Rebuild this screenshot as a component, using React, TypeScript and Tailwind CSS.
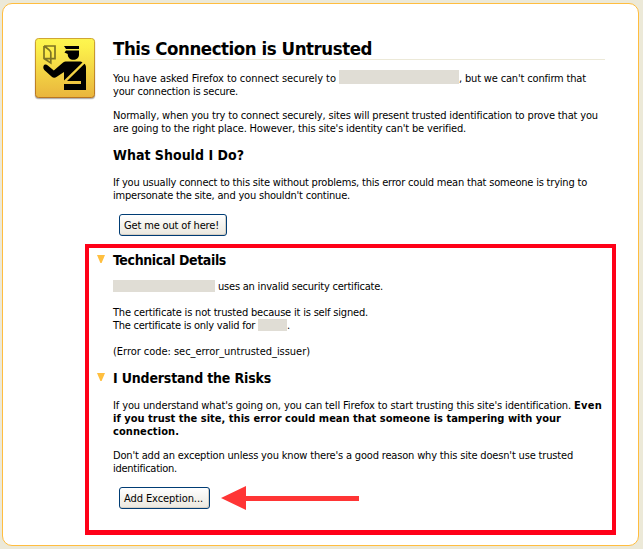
import { useLayoutEffect, useRef, type ReactNode } from "react";

/** A single run of text whose tracking is computed so that it fills `width` pixels. */
function Run({ width, children, className = "" }: { width: number; children: string; className?: string }) {
  const ref = useRef<HTMLSpanElement>(null);
  useLayoutEffect(() => {
    const el = ref.current;
    if (!el) return;
    el.style.letterSpacing = "0px";
    const natural = el.getBoundingClientRect().width;
    el.style.letterSpacing = `${(width - natural) / children.length}px`;
  }, [width, children]);
  return (
    <span ref={ref} className={`inline-block shrink-0 whitespace-pre ${className}`}>
      {children}
    </span>
  );
}

function Line({ children }: { children: ReactNode }) {
  return <div className="flex h-[13px] items-center leading-[13px]">{children}</div>;
}

function Heading({ width, children }: { width: number; children: string }) {
  return (
    <h2 className="flex h-5 items-center text-[14px] leading-5 font-bold">
      <Run width={width}>{children}</Run>
    </h2>
  );
}

function Marker() {
  return (
    <svg className="mt-[5px] mr-[8px] h-2 w-2 shrink-0" viewBox="0 0 8 8">
      <path d="M0 0H8L4.6 8H3.4Z" fill="#ffbf3f" />
    </svg>
  );
}

function Button({ children, size, width }: { children: string; size: string; width: number }) {
  return (
    <button
      className={`flex h-[22px] items-center rounded-[3px] border border-[#003c74] bg-linear-to-b from-white via-[#f4f3ee] to-[#ebe8df] pl-[4px] leading-[13px] shadow-[inset_-1px_-1px_0_#d6d0c5] ${size}`}
    >
      <Run width={width}>{children}</Run>
    </button>
  );
}

function OfficerIcon() {
  return (
    <svg className="h-[64px] w-[64px] shrink-0" viewBox="0 0 64 64">
      <defs>
        <linearGradient id="plate" x1="0" y1="0" x2="0" y2="1">
          <stop offset="0" stopColor="#fdf650" />
          <stop offset="0.15" stopColor="#fcf04b" />
          <stop offset="1" stopColor="#e9b53d" />
        </linearGradient>
        <linearGradient id="edge" x1="0" y1="0" x2="0" y2="1">
          <stop offset="0" stopColor="#d0a633" />
          <stop offset="1" stopColor="#b97520" />
        </linearGradient>
      </defs>
      <rect x="1.5" y="3" width="61" height="60.5" rx="4" fill="#000" opacity="0.12" />
      <rect x="2" y="2.5" width="60" height="60.5" rx="4" fill="#000" opacity="0.2" />
      <rect x="2.5" y="2.5" width="59" height="59" rx="3" fill="url(#plate)" stroke="url(#edge)" />
      <path
        d="M11 10H22V22.7H18M11 10V22.5L17.8 27V16.5C17.5 14.5 14 12 11 10M11 22.7H18"
        fill="none"
        stroke="#7d7424"
        strokeWidth="1.7"
      />
      <path d="M31 10H46V13H33Z" fill="#000" />
      <path d="M33 14.5H46V19C45.8 22 43.5 23.8 40.5 23.8C37 23.8 34.7 21.5 34.7 18L31.5 16.5Z" fill="#000" />
      <path
        d="M11.8 28.6C12.8 28.2 13.8 28.6 14.8 29.6L20.8 34.5L29.5 27C30.8 25.9 32 25.5 34 25.5H46C48 25.5 49 26 49.5 26.5L31 44.6V36L23.8 40.8C21.8 42.2 20.3 42 18.5 40.5L11.3 34C9.8 32.3 10 29.5 11.8 28.6Z"
        fill="#000"
      />
      <path d="M51.5 27.8C52.5 28.8 53 30 53 32V54H31V48H48V45H34Z" fill="#000" />
    </svg>
  );
}

export default function App() {
  return (
    <div className="h-[549px] w-[643px] overflow-hidden bg-[#ece9d8] pt-[3px] pl-[2px] font-['DejaVu_Sans_Condensed','DejaVu_Sans',sans-serif] text-[11px] text-black [font-stretch:condensed]">
      <main className="flex h-[543px] w-[637px] rounded-[10px] border border-[#ffbd3f] bg-white pt-[32px] pl-[30px]">
        <OfficerIcon />
        <div className="ml-[16px] w-[492px]">
          <h1 className="flex h-[24px] items-center border-b border-[#ece9d8] pt-[2px] text-[18.5px] leading-6 font-bold">
            <Run width={259}>This Connection is Untrusted</Run>
          </h1>
          <div className="mt-[12px]">
            <Line>
              <Run width={226}>You have asked Firefox to connect securely to </Run>
              <span className="-mt-[3px] h-[14px] w-[120px] shrink-0 bg-[#e0ddd5]" />
              <Run width={127}>, but we can't confirm that</Run>
            </Line>
            <Line>
              <Run width={125}>your connection is secure.</Run>
            </Line>
          </div>
          <div className="mt-[11px]">
            <Line>
              <Run width={485}>Normally, when you try to connect securely, sites will present trusted identification to prove that you</Run>
            </Line>
            <Line>
              <Run width={353}>are going to the right place. However, this site's identity can't be verified.</Run>
            </Line>
          </div>
          <div className="mt-[10px]">
            <Heading width={131}>What Should I Do?</Heading>
          </div>
          <div className="mt-[11px]">
            <Line>
              <Run width={474}>If you usually connect to this site without problems, this error could mean that someone is trying to</Run>
            </Line>
            <Line>
              <Run width={237}>impersonate the site, and you shouldn't continue.</Run>
            </Line>
          </div>
          <div className="mt-[12px] ml-[6px]">
            <Button size="w-[108px]" width={95}>Get me out of here!</Button>
          </div>
          <section className="mt-[8px] -ml-[28px] h-[291px] w-[531px] border-4 border-b-5 border-[#ff0018] pt-[2px] pl-[8px]">
            <div className="flex">
              <Marker />
              <Heading width={113}>Technical Details</Heading>
            </div>
            <div className="mt-[10px] ml-[16px]">
              <Line>
                <span className="-mt-px mr-[3px] h-[12px] w-[102px] shrink-0 bg-[#e0ddd5]" />
                <Run width={165}>uses an invalid security certificate.</Run>
              </Line>
              <div className="mt-[13px]">
                <Line>
                  <Run width={255}>The certificate is not trusted because it is self signed.</Run>
                </Line>
                <Line>
                  <Run width={145}>The certificate is only valid for </Run>
                  <span className="-mt-px h-[12px] w-[29px] shrink-0 bg-[#e0ddd5]" />
                  <Run width={4}>.</Run>
                </Line>
              </div>
              <div className="mt-[13px]">
                <Line>
                  <Run width={197}>(Error code: sec_error_untrusted_issuer)</Run>
                </Line>
              </div>
            </div>
            <div className="mt-[10px] flex">
              <Marker />
              <Heading width={158}>I Understand the Risks</Heading>
            </div>
            <div className="mt-[11px] ml-[16px]">
              <Line>
                <Run width={461}>If you understand what's going on, you can tell Firefox to start trusting this site's identification. </Run>
                <Run width={28} className="font-bold">Even</Run>
              </Line>
              <Line>
                <Run width={448} className="font-bold">if you trust the site, this error could mean that someone is tampering with your</Run>
              </Line>
              <Line>
                <Run width={66} className="font-bold">connection.</Run>
              </Line>
              <div className="mt-[11px]">
                <Line>
                  <Run width={460}>Don't add an exception unless you know there's a good reason why this site doesn't use trusted</Run>
                </Line>
                <Line>
                  <Run width={64}>identification.</Run>
                </Line>
              </div>
              <div className="mt-[11px] ml-[6px] flex items-center">
                <Button size="w-[91px]" width={79}>Add Exception...</Button>
                <svg className="ml-[11px] h-6 w-[138px]" viewBox="0 0 138 24">
                  <path d="M0 12L25 0V10H138V15H25V24Z" fill="#ff3535" />
                </svg>
              </div>
            </div>
          </section>
        </div>
      </main>
    </div>
  );
}
